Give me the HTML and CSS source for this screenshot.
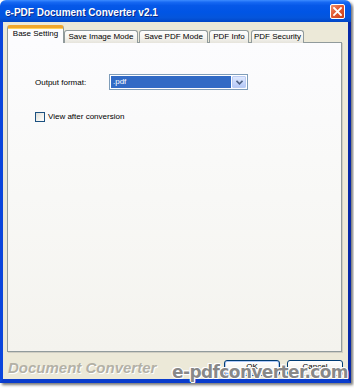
FILE: index.html
```html
<!DOCTYPE html>
<html>
<head>
<meta charset="utf-8">
<link rel="stylesheet" href="styles.css">
</head>
<body>
<div class="window">
  <div class="titlebar">
    <span class="title">e-PDF Document Converter v2.1</span>
    <span class="close">
      <svg width="9" height="9" viewBox="0 0 9 9"><path d="M1 1 L8 8 M8 1 L1 8" stroke="#fff" stroke-width="1.8" stroke-linecap="square"/></svg>
    </span>
  </div>
  <div class="frame">
    <div class="tabs">
      <div class="tab tab-active tab-base">Base Setting</div>
      <div class="tab tab-image">Save Image Mode</div>
      <div class="tab tab-pdf">Save PDF Mode</div>
      <div class="tab tab-info">PDF Info</div>
      <div class="tab tab-sec">PDF Security</div>
    </div>
    <div class="panel">
      <div class="row">
        <span class="label">Output format:</span>
        <div class="combo">
          <span class="combo-value">.pdf</span>
          <span class="combo-btn">
            <svg width="7" height="5" viewBox="0 0 7 5"><path d="M0.5 0.8 L3.5 3.8 L6.5 0.8" fill="none" stroke="#4d6185" stroke-width="1.6"/></svg>
          </span>
        </div>
      </div>
      <div class="check-row">
        <span class="checkbox"></span>
        <span class="check-label">View after conversion</span>
      </div>
    </div>
    <div class="bottom">
      <span class="brand">Document Converter</span>
      <div class="buttons">
        <span class="btn btn-default">OK</span>
        <span class="btn">Cancel</span>
      </div>
    </div>
  </div>
  <div class="watermark">e-pdfconverter.com</div>
</div>
</body>
</html>
```

FILE: styles.css
```css
html, body {
  margin: 0;
  padding: 0;
  background: #ffffff;
}

body {
  width: 354px;
  height: 389px;
  overflow: hidden;
  font-family: "Liberation Sans", Arial, sans-serif;
  font-size: 8px;
  color: #000;
}

.window {
  position: relative;
  width: 351px;
  height: 383px;
  display: flex;
  flex-direction: column;
  border-radius: 6px 6px 0 0;
  box-shadow: 2px 2px 3px rgba(0, 0, 0, 0.55);
  background: #ece9d8;
}

.titlebar {
  height: 22px;
  flex: none;
  display: flex;
  align-items: center;
  justify-content: space-between;
  padding: 0 6px 0 5px;
  border-radius: 6px 6px 0 0;
  background: linear-gradient(to bottom, #3d8cff 0%, #1769f3 10%, #0658e8 25%, #0055e5 55%, #0455dc 80%, #0246c6 100%);
}

.title {
  color: #ffffff;
  font-weight: bold;
  font-size: 10px;
  padding-top: 2px;
  text-shadow: 1px 1px 0 #0a2a8a;
}

.close {
  width: 13px;
  height: 13px;
  display: flex;
  align-items: center;
  justify-content: center;
  border: 1px solid #ffffff;
  border-radius: 2px;
  background: linear-gradient(135deg, #f08f6c 0%, #e25a34 45%, #c8401b 100%);
  margin-top: 1px;
}

.close svg {
  display: block;
}

.frame {
  flex: 1;
  display: flex;
  flex-direction: column;
  border-left: 3px solid #0a45dc;
  border-right: 3px solid #0628a8;
  border-bottom: 4px solid #0a3ccc;
  padding: 4px 6px 0 4px;
}

.tabs {
  display: flex;
  align-items: flex-end;
  height: 17px;
  position: relative;
  z-index: 1;
  margin-bottom: -1px;
}

.tab {
  box-sizing: border-box;
  height: 13px;
  border: 1px solid #919b9c;
  border-bottom: none;
  border-radius: 3px 3px 0 0;
  background: linear-gradient(to bottom, #fefefe 0%, #f4f3ee 60%, #e6e4dc 100%);
  text-align: center;
  line-height: 12px;
  white-space: nowrap;
  flex: none;
  color: #000;
}

.tab-active {
  height: 18px;
  background: #fcfcfe;
  border-top: 3px solid #f0a62c;
  line-height: 12px;
  box-shadow: inset 0 1px 0 #ffd25a;
}

.tab-base { width: 57px; }
.tab-image { width: 74px; margin-right: 1px; }
.tab-pdf { width: 69px; margin-right: 1px; }
.tab-info { width: 40px; margin-right: 2px; }
.tab-sec { width: 53px; }

.panel {
  box-sizing: border-box;
  height: 310px;
  flex: none;
  border: 1px solid #919b9c;
  background: linear-gradient(to bottom, #fcfcfe 0%, #f8f8f6 50%, #f4f3ee 100%);
  padding: 31px 0 0 27px;
  box-shadow: 1px 1px 0 #d0cec3;
}

.row {
  display: flex;
  align-items: center;
  height: 16px;
}

.label {
  width: 74px;
  flex: none;
}

.combo {
  box-sizing: border-box;
  width: 139px;
  height: 16px;
  border: 1px solid #7f9db9;
  background: #ffffff;
  display: flex;
  padding: 1px;
}

.combo-value {
  flex: 1;
  background: #316ac5;
  color: #ffffff;
  padding-left: 2px;
  line-height: 12px;
}

.combo-btn {
  box-sizing: border-box;
  width: 14px;
  flex: none;
  margin-left: 1px;
  border: 1px solid #b9cbf3;
  border-radius: 1px;
  background: linear-gradient(to bottom, #dfe8fd 0%, #c6d6fb 60%, #b4c8f6 100%);
  display: flex;
  align-items: center;
  justify-content: center;
}

.combo-btn svg {
  display: block;
}

.check-row {
  display: flex;
  align-items: center;
  margin-top: 22px;
  height: 10px;
}

.checkbox {
  box-sizing: border-box;
  width: 10px;
  height: 10px;
  border: 1px solid #1c5180;
  background: linear-gradient(135deg, #dcdcd7 0%, #f4f4f0 60%, #ffffff 100%);
  margin-right: 3px;
  flex: none;
}

.check-label {
  line-height: 10px;
}

.bottom {
  flex: 1;
  display: flex;
  align-items: center;
  justify-content: space-between;
  padding: 0 0 0 1px;
  margin-right: -1px;
}

.brand {
  font-size: 15px;
  font-weight: bold;
  font-style: italic;
  color: #b3b1a6;
  text-shadow: 1px 1px 0 #ffffff;
  margin-top: 3px;
}

.buttons {
  display: flex;
  gap: 7px;
  margin-top: 5px;
}

.btn {
  box-sizing: border-box;
  width: 56px;
  height: 16px;
  border: 1px solid #003c74;
  border-radius: 3px;
  background: linear-gradient(to bottom, #ffffff 0%, #f5f4ef 60%, #e3e1d8 100%);
  display: flex;
  align-items: flex-start;
  justify-content: center;
  line-height: 10px;
  padding-top: 1px;
}

.btn-default {
  box-shadow: inset 0 0 0 1px #aec8f7, inset 0 -1px 0 1px #8aaef0;
}

.watermark {
  position: absolute;
  left: 172px;
  top: 363px;
  font-family: "DejaVu Sans", Verdana, sans-serif;
  font-weight: bold;
  font-size: 17px;
  line-height: 18px;
  letter-spacing: -0.6px;
  color: rgba(120, 120, 120, 0.88);
  text-shadow: -1px 0 0 #fff, 1px 0 0 #fff, 0 -1px 0 #fff, 0 1px 0 #fff, 1px 1px 0 #fff, -1px -1px 0 #fff;
  white-space: nowrap;
}
```
